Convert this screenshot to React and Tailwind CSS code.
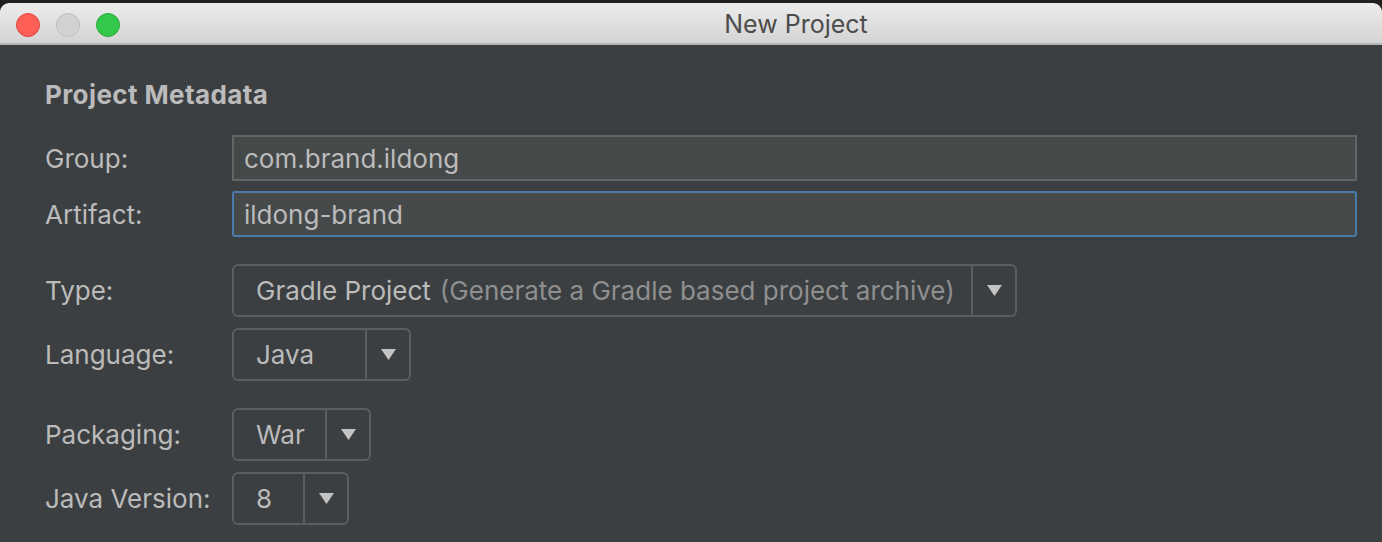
import React from "react";

const font = { fontFamily: "Inter, 'Noto Sans', 'Liberation Sans', sans-serif" };

function Arrow() {
  return (
    <svg width="15" height="11" viewBox="0 0 15 11">
      <path d="M0 0 L15 0 L7.5 11 Z" fill="#c3c3c3" />
    </svg>
  );
}

function Combo({ width, children }) {
  return (
    <div className={`flex h-[53px] rounded-[6px] border-2 border-[#5b5e60] bg-[#3c3f41] ${width}`}>
      <div className="flex flex-1 items-center pl-[22px] text-[26px] text-[#bbbbbb] whitespace-nowrap">{children}</div>
      <div className="flex w-[44px] items-center justify-center border-l-2 border-[#5b5e60]">
        <Arrow />
      </div>
    </div>
  );
}

function Row({ label, children, className = "" }) {
  return (
    <div className={`flex items-center ${className}`}>
      <div className="w-[187px] shrink-0 text-[26px] text-[#bbbbbb] whitespace-nowrap">{label}</div>
      {children}
    </div>
  );
}

export default function App() {
  return (
    <div className="w-[1382px] h-[542px] overflow-hidden bg-[#202020] pt-[3px]" style={font}>
      <div className="h-full rounded-t-[9px] overflow-hidden flex flex-col">
        <div className="relative flex h-[42px] shrink-0 items-center justify-center border-b-2 border-[#b4b4b4] bg-gradient-to-b from-[#ececec] to-[#d4d4d4] pl-[210px]">
          <div className="absolute left-[16px] top-[10px] flex gap-[16px]">
            <span className="h-[24px] w-[24px] rounded-full border border-[#e0443e] bg-[#fd5f57]" />
            <span className="h-[24px] w-[24px] rounded-full border border-[#bdbdbd] bg-[#d2d2d2]" />
            <span className="h-[24px] w-[24px] rounded-full border border-[#27aa35] bg-[#34c84a]" />
          </div>
          <span className="mt-[3px] text-[25px] text-[#4c4c4c] leading-none">New Project</span>
        </div>

        <div className="flex-1 bg-[#3c3f41] pl-[45px] pr-[25px]">
          <div className="pt-[34px] text-[26px] font-bold leading-[32px] tracking-[0.4px] text-[#bbbbbb]">Project Metadata</div>

          <Row label="Group:" className="mt-[24px]">
            <div className="flex h-[46px] flex-1 items-center border-2 border-[#646464] bg-[#45494a] pl-[10px] text-[26px] text-[#bbbbbb]">
              com.brand.ildong
            </div>
          </Row>
          <Row label="Artifact:" className="mt-[10px]">
            <div className="flex h-[46px] flex-1 items-center rounded-[3px] border-2 border-[#4a79ab] bg-[#45494a] pl-[10px] text-[26px] text-[#bbbbbb]">
              ildong-brand
            </div>
          </Row>

          <Row label="Type:" className="mt-[27px]">
            <Combo width="w-[785px]">
              Gradle Project <span className="ml-[9px] text-[#8f8f8f]">(Generate a Gradle based project archive)</span>
            </Combo>
          </Row>
          <Row label="Language:" className="mt-[11px]">
            <Combo width="w-[179px]">Java</Combo>
          </Row>
          <Row label="Packaging:" className="mt-[27px]">
            <Combo width="w-[139px]">War</Combo>
          </Row>
          <Row label="Java Version:" className="mt-[11px]">
            <Combo width="w-[117px]">8</Combo>
          </Row>
        </div>
      </div>
    </div>
  );
}
